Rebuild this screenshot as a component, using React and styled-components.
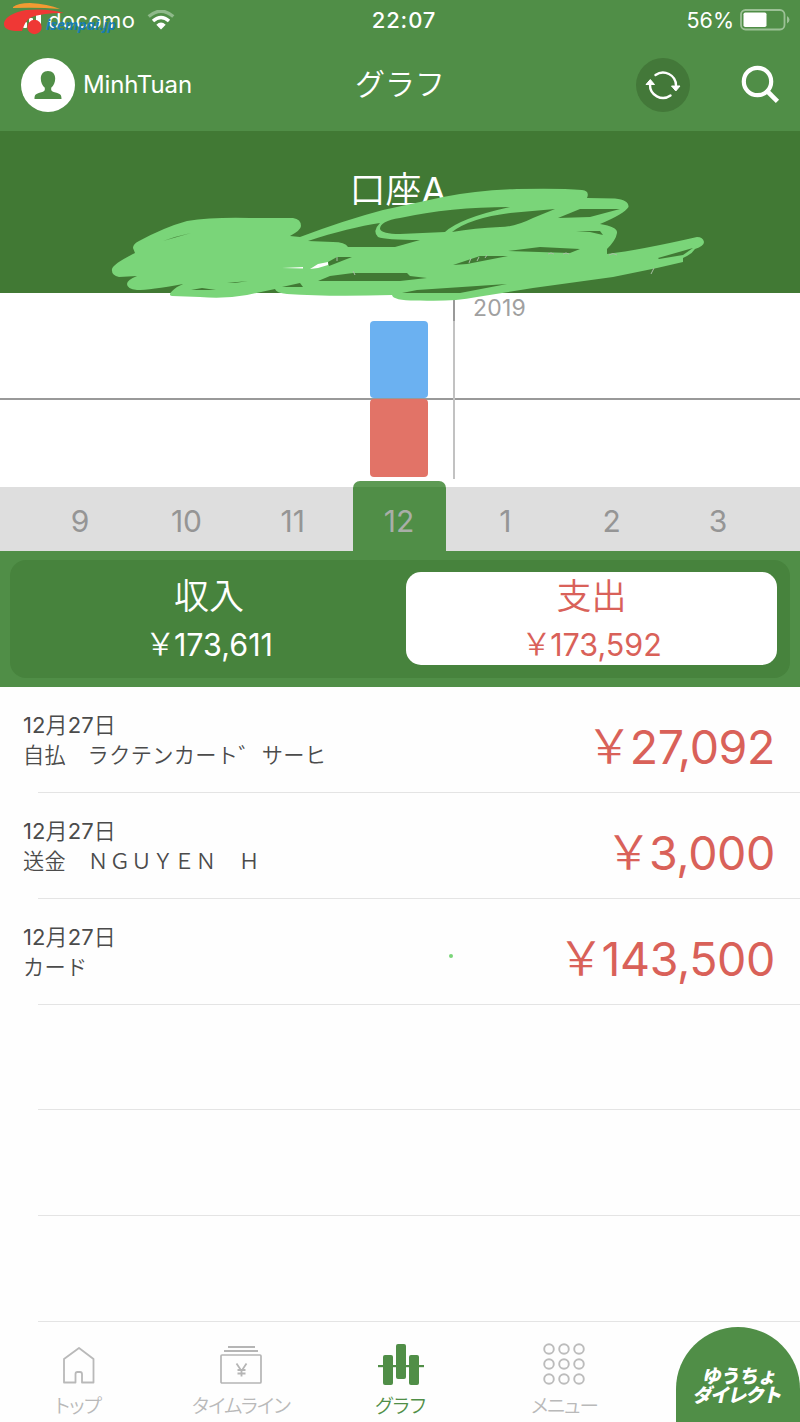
import React from "react";
import styled, { createGlobalStyle } from "styled-components";

const Global = createGlobalStyle`
  * { box-sizing: border-box; }
  body { margin: 0; background: #fefefe; }
`;
const Screen = styled.div`
  position: relative;
  width: 800px;
  height: 1422px;
  overflow: hidden;
  display: flex;
  flex-direction: column;
  background: #fefefe;
  font-family: Inter, "Noto Sans CJK JP", sans-serif;
  font-weight: 350;
  white-space: nowrap;
`;
const Header = styled.header`
  height: 131px;
  flex: none;
  background: #508e47;
  color: #fff;
`;
const StatusBar = styled.div`
  height: 40px;
  display: grid;
  grid-template-columns: 1fr 100px 1fr;
  align-items: center;
`;
const Carrier = styled.div`
  display: flex;
  align-items: center;
  gap: 12px;
  padding-left: 22px;
  font-size: 22px;
  font-weight: 400;
`;
const CarrierName = styled.span`
  margin-left: -6px;
  letter-spacing: 0.4px;
`;
const Clock = styled.div`
  padding-left: 8px;
  text-align: center;
  font-size: 22px;
  font-weight: 500;
  letter-spacing: 0.9px;
`;
const Battery = styled.div`
  display: flex;
  justify-content: flex-end;
  align-items: center;
  gap: 6px;
  padding-right: 9px;
  font-size: 21.5px;
  font-weight: 400;
`;
const NavBar = styled.div`
  height: 89px;
  display: grid;
  grid-template-columns: 1fr 100px 1fr;
  align-items: center;
`;
const User = styled.div`
  display: flex;
  align-items: center;
  gap: 8px;
  padding-left: 21px;
  font-size: 24px;
  font-weight: 400;
  letter-spacing: -0.1px;
`;
const Title = styled.h1`
  margin: 0 0 2px;
  text-align: center;
  font-size: 30px;
  font-weight: 350;
  line-height: 40px;
`;
const Actions = styled.div`
  display: flex;
  justify-content: flex-end;
  align-items: center;
  gap: 49px;
  padding-right: 19px;
`;
const Account = styled.section`
  height: 162px;
  flex: none;
  padding-top: 36px;
  background: #417934;
  color: #fff;
  text-align: center;
  font-size: 36px;
  line-height: 46px;
`;
const AccountName = styled.span`
  margin-right: 4px;
`;
const Scribble = styled.svg`
  position: absolute;
  left: 100px;
  top: 180px;
`;
const Chart = styled.section`
  height: 194px;
  flex: none;
  display: grid;
  grid-template-columns: 370px 58px 25px 2px 1fr;
  background: linear-gradient(#999, #999) 0 105px / 100% 2px no-repeat #fff;
`;
const Bars = styled.div`
  grid-column: 2;
  padding-top: 28px;
`;
const Bar = styled.div`
  height: ${(p) => p.$height}px;
  background: ${(p) => p.$color};
  border-radius: 4px;
  margin-bottom: 1px;
`;
const YearLine = styled.div`
  grid-column: 4;
  height: 186px;
  background: linear-gradient(#999 28px, #c2c2c2 28px);
`;
const Year = styled.div`
  padding: 1px 0 0 18px;
  font-size: 23px;
  line-height: 28px;
  font-weight: 400;
  letter-spacing: 0.2px;
  color: #a0a0a0;
`;
const Months = styled.nav`
  height: 64px;
  flex: none;
  display: grid;
  grid-template-columns: 27px repeat(7, 106.3px) 1fr;
  background: #dedede;
`;
const Month = styled.div`
  grid-column: ${(p) => p.$column};
  display: flex;
  justify-content: center;
  align-items: center;
  padding-top: 4px;
  font-size: 30px;
  font-weight: 400;
  color: #959595;
`;
const ActiveMonth = styled(Month)`
  width: 93px;
  height: 70px;
  margin: -6px auto 0;
  padding-top: 10px;
  border-radius: 7px 7px 0 0;
  background: linear-gradient(#5d9a54 6px, #508e47 6px);
  color: #a9aea8;
`;
const Summary = styled.section`
  height: 136px;
  flex: none;
  padding: 9px 10px;
  background: #508e47;
`;
const SummaryPanel = styled.div`
  height: 118px;
  display: flex;
  padding: 12px 14px 13px 13px;
  gap: 11px;
  border-radius: 16px;
  background: #47833d;
`;
const Total = styled.div`
  flex: none;
  width: ${(p) => (p.$active ? 371 : 372)}px;
  border-radius: 15px;
  background: ${(p) => (p.$active ? "#fff" : "transparent")};
  color: ${(p) => (p.$active ? "#d96159" : "#fff")};
  text-align: center;
`;
const TotalLabel = styled.div`
  font-size: 35px;
  line-height: 48px;
`;
const TotalValue = styled.div`
  font-size: 30.5px;
  font-weight: 400;
  line-height: 50px;
  letter-spacing: 0;
`;
const List = styled.main`
  flex: none;
  height: 635px;
  display: grid;
  grid-template-rows: repeat(6, 1fr);
  background: #fefefe;
`;
const Entry = styled.article`
  display: flex;
  justify-content: space-between;
  align-items: center;
  padding: 0 25px 0 23px;
  background: linear-gradient(#e4e4e4, #e4e4e4) 38px 100% / 100% 1px no-repeat;
`;
const Detail = styled.div`
  padding-top: 2px;
  color: #4b4b4b;
`;
const EntryDate = styled.div`
  font-size: 22px;
  line-height: 30px;
  letter-spacing: 0.1px;
`;
const Digits = styled.span`
  font-weight: 400;
`;
const EntryNote = styled.div`
  font-size: 21.2px;
  line-height: 31px;
  letter-spacing: 0.35px;
  word-spacing: -4.5px;
  white-space: pre;
`;
const Amount = styled.div`
  padding-top: 15px;
  font-size: 46.5px;
  font-weight: 400;
  line-height: 60px;
  letter-spacing: -0.4px;
  color: #d96159;
`;
const Yen = styled.span`
  font-family: "Noto Sans CJK JP", sans-serif;
  font-size: 1em;
  font-weight: 350;
  line-height: 0;
  vertical-align: 0.02em;
  margin: 0 -0.05em 0 0;
`;
const TabBar = styled.footer`
  flex: 1;
  display: grid;
  grid-template-columns: 158px 166px 153px 175px 24px 124px;
`;
const Tab = styled.div`
  display: flex;
  flex-direction: column;
  align-items: center;
  padding-top: 20px;
  color: ${(p) => (p.$active ? "#508e47" : "#b9b9b9")};
  font-size: 19.5px;
  line-height: 28px;
`;
const TabLabel = styled.span`
  margin-top: 6px;
  margin-left: ${(p) => p.$shift || 0}px;
  font-feature-settings: "palt";
  letter-spacing: ${(p) => p.$spacing || 0}px;
`;
const Direct = styled.div`
  grid-column: 6;
  margin-top: 5px;
  padding-top: 38px;
  border-radius: 62px 62px 0 0;
  background: #508e47;
  color: #fff;
  text-align: center;
  font-family: "Noto Sans CJK JP", sans-serif;
  font-size: 19px;
  font-weight: 900;
  line-height: 19px;
`;
const DirectLine = styled.div`
  padding-left: ${(p) => p.$indent || 0}px;
  transform: skewX(-12deg);
  letter-spacing: ${(p) => p.$spacing}px;
`;
const Watermark = styled.div`
  position: absolute;
  left: 0;
  top: 0;
  svg { display: block; }
`;
const WatermarkText = styled.span`
  position: absolute;
  left: 46px;
  top: 15px;
  font: italic 700 14.3px/19px "Open Sans", sans-serif;
  color: #187db0;
`;
const Speck = styled.i`
  position: absolute;
  left: 449px;
  top: 954px;
  width: 4px;
  height: 4px;
  border-radius: 50%;
  background: #7ad579;
`;

const ENTRIES = [
  { note: "自払　ラクテンカート゛ サーヒ", amount: "27,092" },
  { note: "送金　ＮＧＵＹＥＮ　Ｈ", amount: "3,000" },
  { note: "カード", amount: "143,500" },
];
const MONTHS = [9, 10, 11, 12, 1, 2, 3];

const SignalIcon = () => (
  <svg width="20" height="18" fill="#fff">
    <rect x="1" y="11" width="4" height="6" rx="1" />
    <rect x="7" y="7" width="4" height="10" rx="1" />
    <rect x="14" y="0" width="5" height="17" rx="1" />
  </svg>
);
const WifiIcon = () => (
  <svg width="28" height="20" viewBox="0 0 28 20" fill="none" strokeWidth="3.4">
    <path d="M1.7 6.5Q14-4 26.3 6.5" stroke="#8fb98a" />
    <path d="M6 11Q14 4 22 11" stroke="#fff" />
    <path d="M9.3 14.7Q14 10.5 18.7 14.7L14 19.5Z" fill="#fff" />
  </svg>
);
const BatteryIcon = () => (
  <svg width="51" height="22" viewBox="0 0 51 22">
    <rect x="1" y="1" width="43.5" height="19.5" rx="4.5" fill="none" stroke="#9cc196" strokeWidth="1.8" />
    <rect x="3.5" y="3.5" width="23" height="14.5" rx="1.8" fill="#fff" />
    <path d="M47 7q5 3.7 0 7.5z" fill="#9cc196" />
  </svg>
);
const AvatarIcon = () => (
  <svg width="54" height="54" viewBox="0 0 54 54">
    <circle cx="27" cy="27" r="27" fill="#fff" />
    <path fill="#508e47" d="M27 13c-4.500 0-7.200 3-7.200 7.500 0 4 1.500 7.200 4 9.300v2.200c-.5 1.600-2.600 2-5.300 2.800-4 1.200-5 2.200-5 6.200h27c0-4-1-5-5-6.200-2.700-.8-4.800-1.200-5.300-2.800v-2.200c2.500-2.100 4-5.300 4-9.300 0-4.500-2.700-7.500-7.200-7.500z" />
  </svg>
);
const RefreshIcon = () => (
  <svg width="54" height="54" viewBox="0 0 54 54">
    <circle cx="27" cy="27" r="27" fill="#437839" />
    <g fill="none" stroke="#fff" strokeWidth="2.400" strokeLinecap="round">
      <path d="M19.500 17A13 13 0 0 1 40 27.500" />
      <path d="M34.500 37.500A13 13 0 0 1 14 26.500" />
    </g>
    <path d="M35.500 28h8.500l-4.200 5z M10 26.500h8.500l-4.200-5z" fill="#fff" stroke="#fff" strokeLinejoin="round" />
  </svg>
);
const SearchIcon = () => (
  <svg width="42" height="44" viewBox="0 0 42 44" fill="none" stroke="#fff">
    <circle cx="18.500" cy="18.500" r="13.700" strokeWidth="4.200" />
    <path d="M28.500 28.500l8.300 8.300" strokeWidth="4.600" strokeLinecap="square" />
  </svg>
);
const HomeIcon = () => (
  <svg width="34" height="44" viewBox="0 0 34 44" fill="none" stroke="#b9b9b9" strokeWidth="1.800" strokeLinejoin="round">
    <path d="M2 17L17 6l14.500 11v23.500h-11.500v-8.500q0-2-2-2h-2.500q-2 0-2 2v8.500H2z" />
  </svg>
);
const TimelineIcon = () => (
  <svg width="44" height="44" viewBox="0 0 44 44" fill="none" stroke="#b5b5b5" strokeWidth="2">
    <path d="M9 5h27M5 9h34" />
    <rect x="2" y="13" width="40" height="28" rx="1" strokeWidth="1.700" />
    <path d="M17.500 21.500l5 7.500 5-7.500M22.500 29v5.500M18.500 28h8M18.500 31.500h8" strokeWidth="1.800" />
  </svg>
);
const GraphIcon = () => (
  <svg width="46" height="44" viewBox="0 0 46 44" fill="#508e47">
    <rect x="0" y="23" width="46" height="2.200" />
    <rect x="5" y="13" width="10" height="30" rx="2" />
    <rect x="18" y="2" width="10" height="35" rx="2" />
    <rect x="31" y="13" width="10" height="30" rx="2" />
  </svg>
);
const MenuIcon = () => (
  <svg width="44" height="44" viewBox="0 0 44 44" fill="none" stroke="#bcbcbc" strokeWidth="1.900">
    {[7, 22, 37].map((y) =>
      [6, 21, 36].map((x) => <circle key={`${x}-${y}`} cx={x} cy={y} r="4.800" />)
    )}
  </svg>
);

const Marker = () => (
  <Scribble width="620" height="125" viewBox="100 180 620 125">
    <path
      fill="#7ad579"
      d="M133 248Q133 244 139 241Q165 227 187 221Q213 217 250 218L293 218Q301 219 301 226Q301 230 290 236L300 237Q345 220 383 210L443 197Q477 190 517 189Q560 188 582 190Q590 191 587 198L615 198.500Q629 200 628.500 207Q624 214 600 224Q618 227 617 233Q616 240 607 249L607 254Q640 250 697 237Q703 237 704 242Q704 246 695 249Q692 254 683 258L683 262L657 268L613 277L533 288L477 297Q450 302 420 300.500Q393 301 392 295Q330 297 287 294Q276 293 275 289L247 295Q225 299 200 297L172 296Q166 295 177 287L183 284Q150 290 137 290Q127 289 127 284Q127 280 137 276L119 277Q111 275 112 269Q113 264 135 253Z"
    />
    <g fill="#417934">
      <path d="M308 241C335 232 360 226 380 223Q372 231 378 237Q385 240 420 240L395 247L348 247Q345 242 333 242Z" />
      <path d="M400 218Q380 221 380 229Q382 234 400 234L445 232Q460 218 510 207Q450 207 400 218Z" />
      <path d="M452 232Q470 218 510 213L555 209L533 218Q515 227 500 227Q475 228 452 232Z" />
      <path d="M558 218L580 209H620L590 217Z" />
      <path d="M508 251L540 247L580 249L570 253Z" />
      <path d="M453 265L480 256H508L467 264Z" />
      <path d="M658 258L693 248L683 255L659 259Z" />
      <path d="M318 281L330 276L353 273H407L410 276L427 278L400 281Z" />
      <path d="M282 287L300 283L303 287Z" />
      <path d="M337 257H352L329 266L328 262Z" />
      <path d="M191 290L202 288L216 290Z M227 283L248 281L235 283Z" />
      <path d="M402 293L417 290L507 284L460 293Z" />
      <path d="M163 241L191 233L175 237Z M576 231L600 231L603 235L590 232Z" />
    </g>
    <path fill="#fff" d="M310 269L318 264L328 262V265L318 268Z M282 268L303 267V268.500Z" />
    <g fill="none" stroke="#a9bda5" strokeWidth="1">
      <path d="M337 257v4M353 271l2 4M469 263l2-5M477 261l2-4M485 258l2-3M548 254q3-2 6 0M563 254q3-2 6 0M609 255q4-3 8 0M654 268l-3 6" />
    </g>
  </Scribble>
);

export default function App() {
  return (
    <Screen>
      <Global />
      <Header>
        <StatusBar>
          <Carrier>
            <SignalIcon />
            <CarrierName>docomo</CarrierName>
            <WifiIcon />
          </Carrier>
          <Clock>22:07</Clock>
          <Battery>
            56%
            <BatteryIcon />
          </Battery>
        </StatusBar>
        <NavBar>
          <User>
            <AvatarIcon />
            MinhTuan
          </User>
          <Title>グラフ</Title>
          <Actions>
            <RefreshIcon />
            <SearchIcon />
          </Actions>
        </NavBar>
      </Header>
      <Account>
        <AccountName>
          口座<Digits>A</Digits>
        </AccountName>
      </Account>
      <Chart>
        <Bars>
          <Bar $height={77} $color="#6bb1f1" />
          <Bar $height={78} $color="#e27367" />
        </Bars>
        <YearLine />
        <Year>2019</Year>
      </Chart>
      <Months>
        {MONTHS.map((m, i) => {
          const Cell = m === 12 ? ActiveMonth : Month;
          return (
            <Cell key={m} $column={i + 2}>
              {m}
            </Cell>
          );
        })}
      </Months>
      <Summary>
        <SummaryPanel>
          <Total>
            <TotalLabel>収入</TotalLabel>
            <TotalValue>
              <Yen>￥</Yen>173,611
            </TotalValue>
          </Total>
          <Total $active>
            <TotalLabel>支出</TotalLabel>
            <TotalValue>
              <Yen>￥</Yen>173,592
            </TotalValue>
          </Total>
        </SummaryPanel>
      </Summary>
      <List>
        {ENTRIES.map((e) => (
          <Entry key={e.amount}>
            <Detail>
              <EntryDate>
                <Digits>12</Digits>月<Digits>27</Digits>日
              </EntryDate>
              <EntryNote>{e.note}</EntryNote>
            </Detail>
            <Amount>
              <Yen>￥</Yen>
              {e.amount}
            </Amount>
          </Entry>
        ))}
        <Entry />
        <Entry />
        <Entry />
      </List>
      <TabBar>
        <Tab>
          <HomeIcon />
          <TabLabel $spacing={-0.7} $shift={-2}>トップ</TabLabel>
        </Tab>
        <Tab>
          <TimelineIcon />
          <TabLabel $spacing={-0.7}>タイムライン</TabLabel>
        </Tab>
        <Tab $active>
          <GraphIcon />
          <TabLabel>グラフ</TabLabel>
        </Tab>
        <Tab>
          <MenuIcon />
          <TabLabel $spacing={-1}>メニュー</TabLabel>
        </Tab>
        <Direct>
          <DirectLine $spacing={-0.5} $indent={5}>ゆうちょ</DirectLine>
          <DirectLine $spacing={-1.5}>ダイレクト</DirectLine>
        </Direct>
      </TabBar>
      <Marker />
      <Speck />
      <Watermark>
        <svg width="70" height="38" viewBox="0 0 70 38">
          <path fill="#f39a32" d="M13 7Q18 3 30 3Q48 4 60 9Q38 7 13 8Z" />
          <path fill="#ef3835" d="M4 23Q6 14 26 10Q48 8 64 13Q40 13 30 18Q25 21 22 31Q3 32 4 23Z" />
          <circle cx="34.500" cy="27" r="7.200" fill="#ef3835" />
        </svg>
        <WatermarkText>isempai.jp</WatermarkText>
      </Watermark>
    </Screen>
  );
}
